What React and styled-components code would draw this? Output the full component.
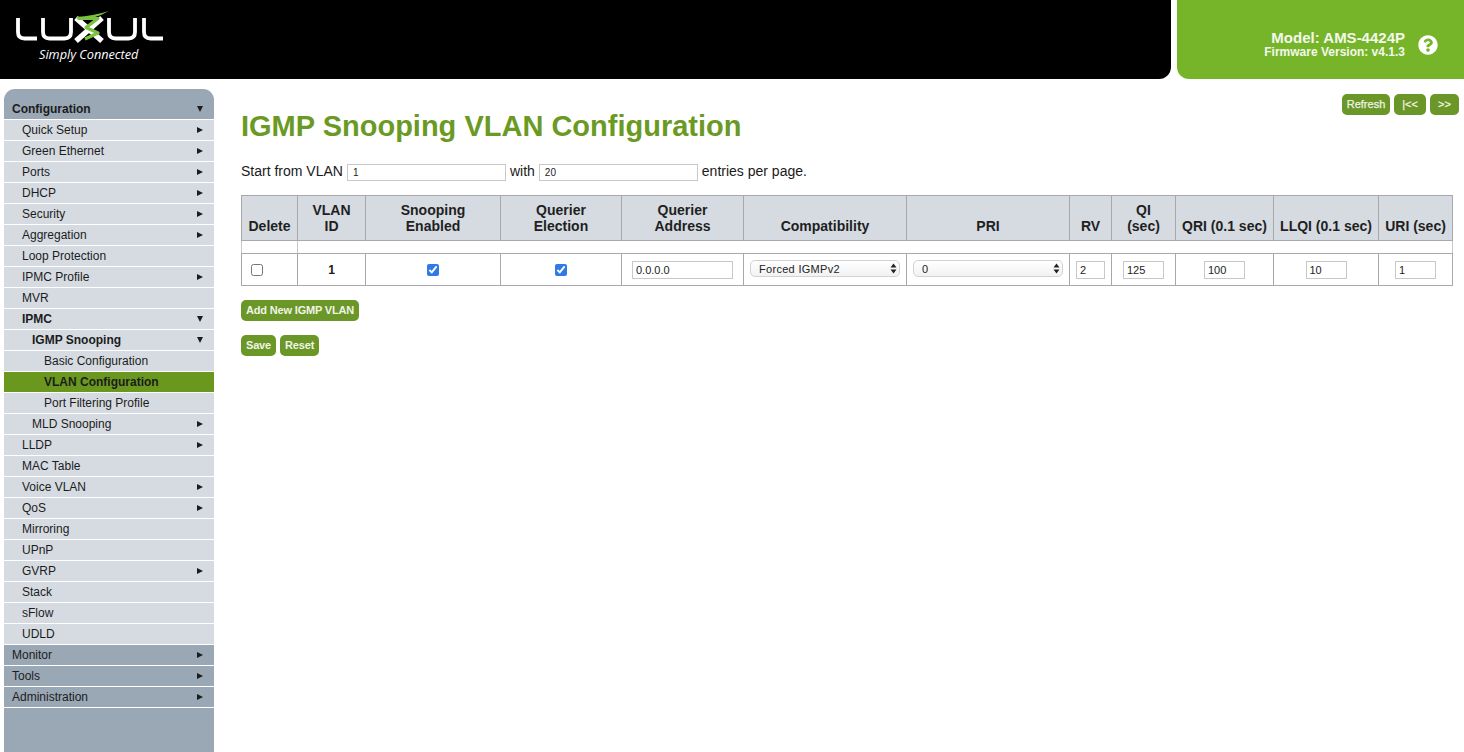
import React from "react";
import styled, { createGlobalStyle } from "styled-components";
import { FaQuestionCircle } from "react-icons/fa";

const GlobalStyle = createGlobalStyle`
  html, body {
    margin: 0;
    padding: 0;
    background: #fff;
    overflow: hidden;
    font-family: "Liberation Sans", Arial, sans-serif;
    color: #1a1a1a;
  }
`;

const Page = styled.div`
  width: 1464px;
  height: 752px;
  display: flex;
  flex-direction: column;
  overflow: hidden;
`;

const Header = styled.header`
  display: flex;
  gap: 6px;
  height: 79px;
  flex: none;
`;

const Brand = styled.div`
  width: 1171px;
  background: #000;
  border-bottom-right-radius: 12px;
  padding-top: 8px;
  box-sizing: border-box;
`;

const LogoMark = styled.svg`
  display: block;
  width: 170px;
  height: 40px;
`;

const Tagline = styled.div`
  margin: -1px 0 0 39px;
  font-family: "Open Sans", sans-serif;
  font-style: italic;
  font-size: 12.7px;
  line-height: 14px;
  color: #fff;
`;

const ModelPanel = styled.div`
  flex: 1;
  background: #76b52a;
  border-bottom-left-radius: 12px;
  display: flex;
  justify-content: flex-end;
  align-items: center;
  gap: 13px;
  padding: 10px 26px 0 0;
  color: #f4f8ec;
  font-weight: bold;
  text-align: right;
  svg {
    color: #fff;
    font-size: 20px;
    display: block;
  }
`;

const ModelName = styled.div`
  font-size: 15px;
  line-height: 15px;
`;

const Firmware = styled.div`
  font-size: 12px;
  line-height: 14px;
`;

const Body = styled.div`
  flex: 1;
  display: flex;
  min-height: 0;
`;

const Sidebar = styled.nav`
  width: 210px;
  margin: 10px 0 0 4px;
  flex: none;
  background: #9aa7b4;
  border-radius: 11px 11px 0 0;
  padding-top: 10px;
  box-sizing: border-box;
`;

const MenuRow = styled.div`
  height: 20px;
  margin-bottom: 1px;
  box-sizing: border-box;
  padding-left: ${(p) => p.$indent}px;
  padding-right: 11px;
  display: flex;
  align-items: center;
  justify-content: space-between;
  font-size: 12px;
  font-weight: ${(p) => (p.$bold ? "bold" : "normal")};
  color: #1c1c1c;
  background: ${(p) =>
    p.$active ? "#6a981f" : p.$top ? "#9aa7b4" : "#d6dbe2"};
  box-shadow: 0 1px 0 #fff;
`;

const Arrow = styled.span`
  width: 0;
  height: 0;
  border-style: solid;
  border-color: transparent;
  ${(p) =>
    p.$down
      ? `border-width: 6px 3px 0 3px; border-top-color: #1c1c1c;`
      : `border-width: 3px 0 3px 6px; border-left-color: #1c1c1c;`}
`;

const Main = styled.main`
  flex: 1;
  padding: 15px 5px 0 27px;
  min-width: 0;
`;

const TopRow = styled.div`
  display: flex;
  justify-content: space-between;
  align-items: flex-start;
`;

const Title = styled.h1`
  margin: 0;
  padding-top: 16px;
  font-size: 29px;
  line-height: 33px;
  font-weight: bold;
  color: #6a9a24;
`;

const ButtonRow = styled.div`
  display: flex;
  gap: ${(p) => p.$gap || 4}px;
  margin-top: ${(p) => p.$top || 0}px;
`;

const Button = styled.button`
  height: 21px;
  border: 0;
  border-radius: 5px;
  padding: 0 5px 1px;
  background: #6a9727;
  color: #f0f4e6;
  font-family: "Liberation Sans", Arial, sans-serif;
  font-size: 11px;
  font-weight: bold;
  letter-spacing: -0.17px;
  white-space: nowrap;
`;

const PagerButton = styled(Button)`
  font-weight: normal;
  letter-spacing: 0;
  -webkit-text-stroke: 0.25px #f0f4e6;
  width: ${(p) => p.$w}px;
  padding: 0 0 1px;
`;

const StartLine = styled.div`
  display: flex;
  align-items: flex-start;
  gap: 4px;
  margin-top: 21px;
  height: 17px;
  font-size: 14px;
  line-height: 15px;
`;

const Input = styled.input`
  box-sizing: border-box;
  width: ${(p) => p.$w}px;
  height: ${(p) => p.$h || 18}px;
  border: 1px solid #c8c8c8;
  padding: 1px 3px;
  margin: 0;
  font-family: "Liberation Sans", Arial, sans-serif;
  font-size: 11px;
  color: #222;
  background: #fff;
  outline: none;
`;

const StartInput = styled(Input)`
  padding-left: 5px;
  font-size: 10px;
`;

const Table = styled.table`
  width: 1211px;
  margin-top: 14px;
  table-layout: fixed;
  border-collapse: collapse;
  font-size: 14px;
`;

const Th = styled.th`
  height: 45px;
  padding: 0 0 6px;
  box-sizing: border-box;
  background: #d5dbe1;
  border: 1px solid #a8a8a8;
  vertical-align: bottom;
  line-height: 16px;
  font-weight: bold;
  color: #1f1f1f;
`;

const SpacerCell = styled.td`
  height: 12px;
  padding: 0;
  border: 1px solid #c9c9c9;
  border-top: 1px solid #a8a8a8;
  border-bottom: 1px solid #a8a8a8;
`;

const Td = styled.td`
  height: 32px;
  padding: 0;
  box-sizing: border-box;
  border: 1px solid #a8a8a8;
  text-align: center;
  font-size: 12px;
  font-weight: ${(p) => (p.$bold ? "bold" : "normal")};
  vertical-align: middle;
  & > input {
    vertical-align: middle;
  }
`;

const DeleteCell = styled(Td)`
  text-align: left;
  padding-left: 9px;
`;

const Check = styled.input.attrs({ type: "checkbox" })`
  width: 12px;
  height: 12px;
  margin: 0;
  accent-color: #2f7ae5;
  vertical-align: middle;
`;

const SelectWrap = styled.div`
  position: relative;
  width: 150px;
  height: 17px;
  margin: 0 auto;
  top: -1px;
`;

const Select = styled.select`
  appearance: none;
  width: 100%;
  height: 100%;
  box-sizing: border-box;
  border: 1px solid #d2d2d2;
  border-radius: 5px;
  padding: 0 0 0 8px;
  background: linear-gradient(#ffffff, #f2f2f2);
  font-family: "Liberation Sans", Arial, sans-serif;
  font-size: 11px;
  letter-spacing: 0.3px;
  color: #222;
  outline: none;
  display: block;
`;

const SelectArrows = styled.svg`
  position: absolute;
  right: 3px;
  top: 3px;
  width: 7px;
  height: 11px;
  pointer-events: none;
`;

const AddRow = styled(ButtonRow)`
  margin-top: 14px;
`;

const colWidths = [56, 68, 135, 121, 122, 163, 163, 42, 64, 98, 105, 74];

const Col = styled.col`
  width: ${(p) => p.$w}px;
`;

const menu = [
  { label: "Quick Setup", indent: 18, arrow: "right" },
  { label: "Green Ethernet", indent: 18, arrow: "right" },
  { label: "Ports", indent: 18, arrow: "right" },
  { label: "DHCP", indent: 18, arrow: "right" },
  { label: "Security", indent: 18, arrow: "right" },
  { label: "Aggregation", indent: 18, arrow: "right" },
  { label: "Loop Protection", indent: 18 },
  { label: "IPMC Profile", indent: 18, arrow: "right" },
  { label: "MVR", indent: 18 },
  { label: "IPMC", indent: 18, arrow: "down", bold: true },
  { label: "IGMP Snooping", indent: 28, arrow: "down", bold: true },
  { label: "Basic Configuration", indent: 40 },
  { label: "VLAN Configuration", indent: 40, bold: true, active: true },
  { label: "Port Filtering Profile", indent: 40 },
  { label: "MLD Snooping", indent: 28, arrow: "right" },
  { label: "LLDP", indent: 18, arrow: "right" },
  { label: "MAC Table", indent: 18 },
  { label: "Voice VLAN", indent: 18, arrow: "right" },
  { label: "QoS", indent: 18, arrow: "right" },
  { label: "Mirroring", indent: 18 },
  { label: "UPnP", indent: 18 },
  { label: "GVRP", indent: 18, arrow: "right" },
  { label: "Stack", indent: 18 },
  { label: "sFlow", indent: 18 },
  { label: "UDLD", indent: 18 },
  { label: "Monitor", indent: 8, arrow: "right", top: true },
  { label: "Tools", indent: 8, arrow: "right", top: true },
  { label: "Administration", indent: 8, arrow: "right", top: true },
];

const Logo = () => (
  <LogoMark viewBox="0 8 170 40" aria-label="Luxul">
    <g fill="none" stroke="#fff" strokeWidth="3.8">
      <path d="M18 18v14q0 6.500 6.500 6.500H37" />
      <path d="M43 18v14q0 6.500 6.500 6.500h15q6.500 0 6.500-6.500V18" />
      <path d="M109 18v14q0 6.500 6.500 6.500h13q6.500 0 6.500-6.500V18" />
      <path d="M144 18v14q0 6.500 6.500 6.500H163" />
    </g>
    <path d="M76 18l26 23M102 18L76 41" fill="none" stroke="#fff" strokeWidth="5.500" />
    <path d="M76 17Q93 16 109 11Q95 19 78 20z" fill="#7cc242" />
    <path
      d="M79 18.500H98L86 27.500L98 33L85 39"
      fill="none"
      stroke="#7cc242"
      strokeWidth="3.200"
      strokeLinejoin="round"
    />
  </LogoMark>
);

const MenuItem = ({ item }) => (
  <MenuRow
    $indent={item.indent}
    $bold={item.bold}
    $active={item.active}
    $top={item.top}
  >
    {item.label}
    {item.arrow ? <Arrow $down={item.arrow === "down"} /> : null}
  </MenuRow>
);

const SelectBox = ({ value }) => (
  <SelectWrap>
    <Select defaultValue={value}>
      <option>{value}</option>
    </Select>
    <SelectArrows viewBox="0 0 7 11">
      <path d="M3.500 .5L6.500 4.500H.5z M3.500 10.500L.5 6.500h6z" fill="#222" />
    </SelectArrows>
  </SelectWrap>
);

const App = () => (
  <Page>
    <GlobalStyle />
    <Header>
      <Brand>
        <Logo />
        <Tagline>Simply Connected</Tagline>
      </Brand>
      <ModelPanel>
        <div>
          <ModelName>Model: AMS-4424P</ModelName>
          <Firmware>Firmware Version: v4.1.3</Firmware>
        </div>
        <FaQuestionCircle />
      </ModelPanel>
    </Header>
    <Body>
      <Sidebar>
        <MenuRow $indent={8} $bold $top>
          Configuration
          <Arrow $down />
        </MenuRow>
        {menu.map((item) => (
          <MenuItem key={item.label} item={item} />
        ))}
      </Sidebar>
      <Main>
        <TopRow>
          <Title>IGMP Snooping VLAN Configuration</Title>
          <ButtonRow>
            <PagerButton $w={48}>Refresh</PagerButton>
            <PagerButton $w={32}>|&lt;&lt;</PagerButton>
            <PagerButton $w={29}>&gt;&gt;</PagerButton>
          </ButtonRow>
        </TopRow>
        <StartLine>
          Start from VLAN
          <StartInput $w={159} $h={17} defaultValue="1" />
          with
          <StartInput $w={159} $h={17} defaultValue="20" />
          entries per page.
        </StartLine>
        <Table>
          <colgroup>
            {colWidths.map((w, i) => (
              <Col key={i} $w={w} />
            ))}
          </colgroup>
          <thead>
            <tr>
              <Th>Delete</Th>
              <Th>VLAN<br />ID</Th>
              <Th>Snooping<br />Enabled</Th>
              <Th>Querier<br />Election</Th>
              <Th>Querier<br />Address</Th>
              <Th>Compatibility</Th>
              <Th>PRI</Th>
              <Th>RV</Th>
              <Th>QI<br />(sec)</Th>
              <Th>QRI (0.1 sec)</Th>
              <Th>LLQI (0.1 sec)</Th>
              <Th>URI (sec)</Th>
            </tr>
          </thead>
          <tbody>
            <tr>
              <SpacerCell />
              <SpacerCell colSpan={11} />
            </tr>
            <tr>
              <DeleteCell><Check /></DeleteCell>
              <Td $bold>1</Td>
              <Td><Check defaultChecked /></Td>
              <Td><Check defaultChecked /></Td>
              <Td><Input $w={101} defaultValue="0.0.0.0" /></Td>
              <Td><SelectBox value="Forced IGMPv2" /></Td>
              <Td><SelectBox value="0" /></Td>
              <Td><Input $w={29} defaultValue="2" /></Td>
              <Td><Input $w={41} defaultValue="125" /></Td>
              <Td><Input $w={41} defaultValue="100" /></Td>
              <Td><Input $w={41} defaultValue="10" /></Td>
              <Td><Input $w={41} defaultValue="1" /></Td>
            </tr>
          </tbody>
        </Table>
        <AddRow>
          <Button>Add New IGMP VLAN</Button>
        </AddRow>
        <ButtonRow $top={14}>
          <Button>Save</Button>
          <Button>Reset</Button>
        </ButtonRow>
      </Main>
    </Body>
  </Page>
);

export default App;
